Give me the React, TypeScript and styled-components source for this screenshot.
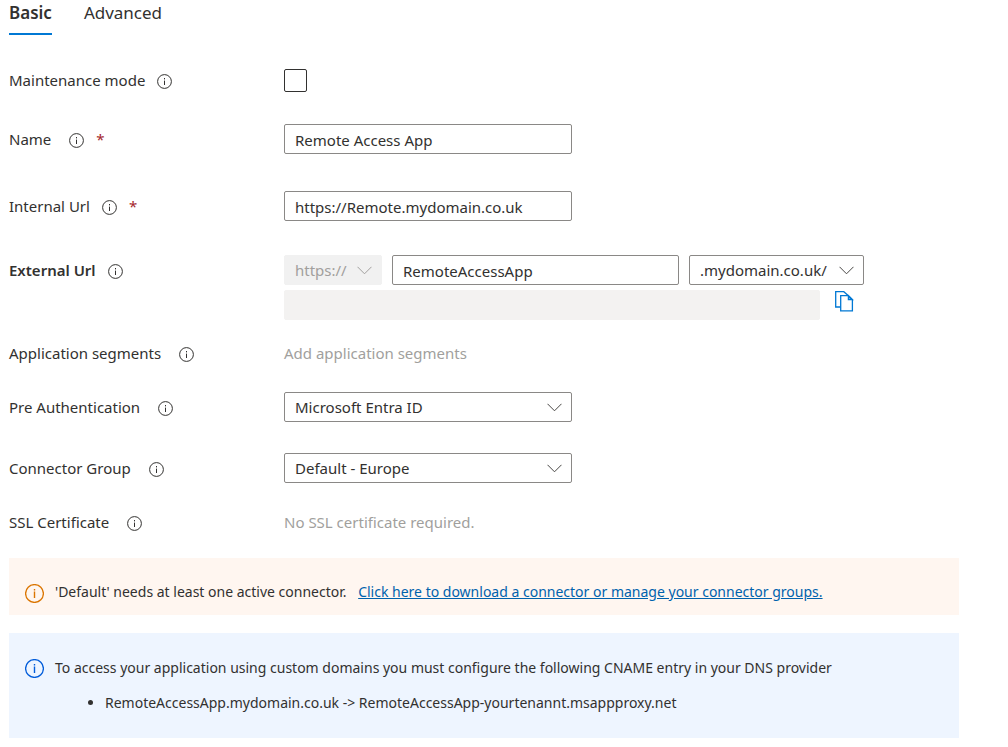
import React, { useState } from 'react';
import styled, { createGlobalStyle } from 'styled-components';

const GlobalStyle = createGlobalStyle`
  * { box-sizing: border-box; }
  body {
    margin: 0;
    background: #ffffff;
    color: #323130;
    font-family: "Segoe UI", "Noto Sans", "Open Sans", sans-serif;
    font-size: 15px;
    line-height: 20px;
  }
`;

const Page = styled.main`
  padding: 0 49px 9px 9px;
`;

const TabList = styled.div`
  display: flex;
  gap: 32px;
  margin-bottom: 30px;
`;

const Tab = styled.button<{ $active: boolean }>`
  height: 35px;
  padding: 0 0 8px;
  border: 0;
  border-bottom: 2px solid ${(p) => (p.$active ? '#0078d4' : 'transparent')};
  background: none;
  color: #323130;
  font: inherit;
  font-size: 17px;
  font-weight: ${(p) => (p.$active ? 600 : 400)};
  cursor: pointer;
`;

const Row = styled.div<{ $after: number }>`
  display: grid;
  grid-template-columns: 275px minmax(0, 1fr);
  margin-bottom: ${(p) => p.$after}px;
`;

const LabelCell = styled.div`
  display: flex;
  align-items: center;
  gap: 12px;
  height: 30px;
`;

const Label = styled.label<{ $wide: boolean; $strong?: boolean }>`
  padding-right: ${(p) => (p.$wide ? 6 : 0)}px;
  font-weight: ${(p) => (p.$strong ? 600 : 400)};
`;

const InfoButton = styled.button`
  display: flex;
  margin-top: 2px;
  padding: 0;
  border: 0;
  background: none;
  color: #323130;
`;

const Required = styled.span`
  color: #a4262c;
`;

const Controls = styled.div`
  display: flex;
  align-items: center;
  gap: 10px;
  min-height: 30px;
`;

const ControlStack = styled.div`
  display: flex;
  flex-direction: column;
  gap: 5px;
`;

const CheckBox = styled.input`
  appearance: none;
  width: 23px;
  height: 23px;
  margin: 0;
  border: 1px solid #323130;
  border-radius: 2px;
  background: #ffffff;
  &:checked { background: #0078d4; }
`;

const TextBox = styled.input<{ $width: number }>`
  width: ${(p) => p.$width}px;
  max-width: 100%;
  height: 30px;
  padding: 2px 10px 0;
  border: 1px solid #8a8886;
  border-radius: 2px;
  background: #ffffff;
  color: #323130;
  font: inherit;
  &:read-only {
    border-color: #f3f2f1;
    background: #f3f2f1;
  }
`;

const SelectWrap = styled.div<{ $width: number }>`
  position: relative;
  width: ${(p) => p.$width}px;
  max-width: 100%;
`;

const SelectBox = styled.select`
  appearance: none;
  display: block;
  width: 100%;
  height: 30px;
  padding: 0 30px 0 10px;
  border: 1px solid #8a8886;
  border-radius: 2px;
  background: #ffffff;
  color: #323130;
  font: inherit;
  &:disabled {
    border-color: #f1f1f1;
    background: #f1f1f1;
    color: #a19f9d;
    opacity: 1;
  }
`;

const Chevron = styled.svg<{ $muted?: boolean }>`
  position: absolute;
  top: 11px;
  right: 10px;
  fill: none;
  stroke: ${(p) => (p.$muted ? '#a19f9d' : '#484644')};
  pointer-events: none;
`;

const MutedText = styled.span`
  color: #a19f9d;
`;

const CopyButton = styled.button`
  display: flex;
  align-self: flex-start;
  margin-left: 5px;
  padding: 1px 0 0;
  border: 0;
  background: none;
  color: #0078d4;
  cursor: pointer;
`;

const Alert = styled.section<{ $tone: 'warning' | 'info' }>`
  display: flex;
  align-items: flex-start;
  gap: 11px;
  margin-bottom: ${(p) => (p.$tone === 'warning' ? 18 : 0)}px;
  padding: ${(p) => (p.$tone === 'warning' ? '24px 16px 12px' : '25px 16px')};
  background: ${(p) => (p.$tone === 'warning' ? '#fff6f0' : '#eef5ff')};
  svg {
    flex: none;
    margin-top: ${(p) => (p.$tone === 'warning' ? 2 : 1)}px;
    color: ${(p) => (p.$tone === 'warning' ? '#db7500' : '#015cda')};
  }
`;

const AlertText = styled.p`
  margin: 0;
  font-size: 14px;
`;

const AlertLink = styled.a`
  margin-left: 8px;
  color: #0062ad;
  text-decoration: underline;
`;

const AlertList = styled.ul`
  margin: 15px 0 0;
  padding-left: 50px;
  font-size: 14px;
`;

function InfoIcon({ size = 15 }: { size?: number }) {
  const c = size / 2;
  const top = Math.round(size * 0.25);
  return (
    <svg width={size} height={size} viewBox={`0 0 ${size} ${size}`} fill="none" stroke="currentColor" aria-hidden="true">
      <circle cx={c} cy={c} r={c - 0.6} strokeWidth={size > 16 ? 1.3 : 1} />
      <path d={`M${c} ${top}v1.4M${c} ${top + 2.6}V${size - top}`} strokeWidth={size > 16 ? 1.4 : 1} />
    </svg>
  );
}

function CopyIcon() {
  return (
    <svg width="19" height="21" viewBox="0 0 19 21" fill="none" stroke="currentColor" strokeWidth="1.3" aria-hidden="true">
      <path d="M5.5 16H.7V.7H8.8L13.4 4.7" />
      <path d="M5.7 4.7H13.4L17.4 8.7V19.8H5.7Z" />
      <path d="M13.4 4.7V8.7H17.4Z" fill="currentColor" fillOpacity="0.5" />
    </svg>
  );
}

type FieldProps = {
  label: string;
  id?: string;
  after: number;
  wide?: boolean;
  strong?: boolean;
  required?: boolean;
  children: React.ReactNode;
};

function Field({ label, id, after, wide = false, strong, required, children }: FieldProps) {
  return (
    <Row $after={after}>
      <LabelCell>
        <Label htmlFor={id} as={id ? 'label' : 'span'} $wide={wide} $strong={strong}>{label}</Label>
        <InfoButton type="button" aria-label={`About ${label}`}><InfoIcon /></InfoButton>
        {required && <Required>*</Required>}
      </LabelCell>
      {children}
    </Row>
  );
}

type SelectProps = { id?: string; name?: string; width: number; disabled?: boolean; option: string };

function Select({ id, name, width, disabled, option }: SelectProps) {
  return (
    <SelectWrap $width={width}>
      <SelectBox id={id} aria-label={name} disabled={disabled}>
        <option>{option}</option>
      </SelectBox>
      <Chevron $muted={disabled} width="15" height="9" viewBox="0 0 15 9" aria-hidden="true">
        <path d="M.5.8L7.5 7.8L14.5.8" />
      </Chevron>
    </SelectWrap>
  );
}

export default function App() {
  const [tab, setTab] = useState('Basic');
  return (
    <>
      <GlobalStyle />
      <Page>
        <TabList role="tablist">
          {['Basic', 'Advanced'].map((name) => (
            <Tab key={name} type="button" role="tab" aria-selected={tab === name} $active={tab === name} onClick={() => setTab(name)}>
              {name}
            </Tab>
          ))}
        </TabList>

        <Field label="Maintenance mode" id="maintenance" after={29}>
          <Controls><CheckBox id="maintenance" type="checkbox" /></Controls>
        </Field>
        <Field label="Name" id="name" after={37} wide required>
          <Controls><TextBox id="name" $width={288} defaultValue="Remote Access App" /></Controls>
        </Field>
        <Field label="Internal Url" id="internal" after={34} required>
          <Controls><TextBox id="internal" $width={288} defaultValue="https://Remote.mydomain.co.uk" /></Controls>
        </Field>
        <Field label="External Url" id="external" after={18} strong>
          <ControlStack>
            <Controls>
              <Select name="Protocol" width={98} option="https://" disabled />
              <TextBox id="external" $width={287} defaultValue="RemoteAccessApp" />
              <Select name="Domain" width={175} option=".mydomain.co.uk/" />
            </Controls>
            <Controls>
              <TextBox $width={536} aria-label="Full external url" readOnly value="" />
              <CopyButton type="button" aria-label="Copy external url"><CopyIcon /></CopyButton>
            </Controls>
          </ControlStack>
        </Field>
        <Field label="Application segments" after={24} wide>
          <Controls><MutedText>Add application segments</MutedText></Controls>
        </Field>
        <Field label="Pre Authentication" id="preauth" after={31} wide>
          <Controls><Select id="preauth" width={288} option="Microsoft Entra ID" /></Controls>
        </Field>
        <Field label="Connector Group" id="connector" after={24} wide>
          <Controls><Select id="connector" width={288} option="Default - Europe" /></Controls>
        </Field>
        <Field label="SSL Certificate" after={21} wide>
          <Controls><MutedText>No SSL certificate required.</MutedText></Controls>
        </Field>

        <Alert $tone="warning">
          <InfoIcon size={19} />
          <AlertText>
            'Default' needs at least one active connector.{' '}
            <AlertLink href="#connectors">Click here to download a connector or manage your connector groups.</AlertLink>
          </AlertText>
        </Alert>
        <Alert $tone="info">
          <InfoIcon size={19} />
          <div>
            <AlertText>To access your application using custom domains you must configure the following CNAME entry in your DNS provider</AlertText>
            <AlertList>
              <li>RemoteAccessApp.mydomain.co.uk -&gt; RemoteAccessApp-yourtenannt.msappproxy.net</li>
            </AlertList>
          </div>
        </Alert>
      </Page>
    </>
  );
}
